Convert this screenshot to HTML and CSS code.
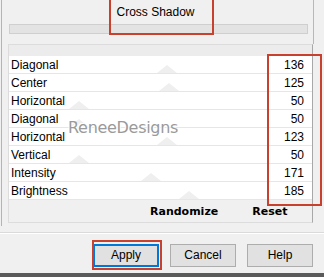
FILE: index.html
```html
<!DOCTYPE html>
<html>
<head>
	<title>Cross Shadow</title>
	<link rel="stylesheet" href="styles.css">
</head>
<body>
	<div id="dialog">
		<div id="main">
			<div id="top">
				<div id="filter_name">Cross Shadow</div>
				<div id="bar"></div>
			</div>

			<div id="panel">
				<div id="head"></div>
				<div class="row"><span>Diagonal</span><span class="val">136</span><i class="thumb" style="left: 148px"></i></div>
				<div class="row"><span>Center</span><span class="val">125</span><i class="thumb" style="left: 150px"></i></div>
				<div class="row"><span>Horizontal</span><span class="val">50</span><i class="thumb" style="left: 60px"></i></div>
				<div class="row"><span>Diagonal</span><span class="val">50</span><i class="thumb" style="left: 60px"></i></div>
				<div class="row"><span>Horizontal</span><span class="val">123</span><i class="thumb" style="left: 148px"></i></div>
				<div class="row"><span>Vertical</span><span class="val">50</span><i class="thumb" style="left: 60px"></i></div>
				<div class="row"><span>Intensity</span><span class="val">171</span><i class="thumb" style="left: 132px"></i></div>
				<div class="row"><span>Brightness</span><span class="val">185</span><i class="thumb" style="left: 170px"></i></div>
				<div id="tools">
					<strong>Randomize</strong>
					<strong>Reset</strong>
				</div>
			</div>
		</div>

		<div id="buttons">
			<div class="btn default">Apply</div>
			<div class="btn">Cancel</div>
			<div class="btn">Help</div>
		</div>
	</div>

	<div id="mark">ReneeDesigns</div>
	<div class="hl" id="hl_name"></div>
	<div class="hl" id="hl_vals"></div>
	<div class="hl" id="hl_apply"></div>
	<div id="foot"></div>
</body>
</html>
```

FILE: styles.css
```css
body {
	margin: 0;
	width: 324px;
	height: 277px;
	overflow: hidden;
	position: relative;
	background-color: #f0f0f0;
	font-family: "Liberation Sans", Arial, sans-serif;
	font-size: 12px;
	color: #000;
}

#dialog {
	height: 273px;
	display: flex;
	flex-direction: column;
}

#main {
	margin-left: 1px;
	width: 313px;
	height: 226px;
	box-sizing: border-box;
	border-left: 1px solid #b4b4b4;
}

#top {
	height: 44px;
	display: flex;
	flex-direction: column;
	border-right: 1px solid #b8b8b8;
}
#filter_name {
	height: 24px;
	line-height: 24px;
	text-align: center;
	padding-right: 4px;
}
#bar {
	height: 8px;
	margin-left: 7px;
	width: 297px;
	border: 1px solid #cfcfcf;
	background-color: #e3e3e3;
}

#panel {
	margin-left: 6px;
	width: 305px;
	height: 179px;
	box-sizing: border-box;
	border: 1px solid #dcdcdc;
	border-right-color: #a8a8a8;
	display: flex;
	flex-direction: column;
}
#head {
	height: 11px;
	background-color: #ececec;
}
.row {
	position: relative;
	height: 18px;
	box-sizing: border-box;
	padding: 0 8px 0 2px;
	display: flex;
	justify-content: space-between;
	align-items: center;
	background-color: #fff;
	border-bottom: 1px solid #e6e6e6;
}
.row span {
	position: relative;
	z-index: 1;
}
.thumb {
	position: absolute;
	bottom: 0;
	width: 0;
	height: 0;
	border-left: 10px solid transparent;
	border-right: 10px solid transparent;
	border-bottom: 8px solid #efefef;
}

#tools {
	flex: 1;
	display: flex;
	align-items: center;
	padding-left: 141px;
	gap: 34px;
	font-family: "DejaVu Sans", sans-serif;
	font-size: 11px;
}

#buttons {
	margin-top: 6px;
	border-top: 1px solid #dadada;
	box-shadow: inset 0 1px 0 #fff;
	flex: 1;
	display: flex;
	justify-content: flex-end;
	align-items: center;
	gap: 11px;
	padding: 5px 11px 0 0;
}
.btn {
	width: 66px;
	height: 23px;
	box-sizing: border-box;
	line-height: 21px;
	text-align: center;
	background-color: #e1e1e1;
	border: 1px solid #adadad;
}
.btn.default {
	border: 1px solid #0078d7;
	box-shadow: inset 0 0 0 1px #0078d7;
}

#foot {
	height: 4px;
	background-color: #5a5a5a;
}

#mark {
	position: absolute;
	left: 68px;
	top: 118px;
	font-family: "DejaVu Sans", sans-serif;
	font-size: 16px;
	color: #9a9a9a;
	letter-spacing: -0.3px;
	text-shadow: 1px 1px 0 #fff, -1px -1px 0 #fff;
}

.hl {
	position: absolute;
	border: 2px solid #c8412e;
}
#hl_name {
	left: 109px;
	top: -2px;
	width: 101px;
	height: 33px;
}
#hl_vals {
	left: 267px;
	top: 54px;
	width: 51px;
	height: 148px;
}
#hl_apply {
	left: 92px;
	top: 240px;
	width: 66px;
	height: 26px;
}
```
